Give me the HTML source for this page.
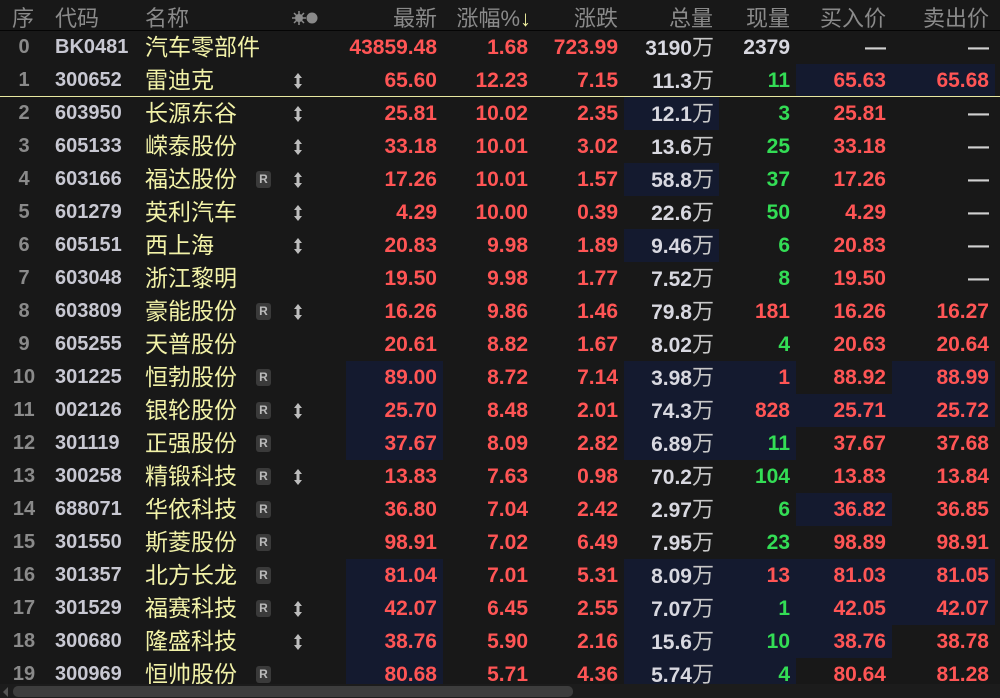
<!DOCTYPE html>
<html><head><meta charset="utf-8">
<style>
*{margin:0;padding:0;box-sizing:border-box}
body{width:1000px;height:698px;background:#181818;overflow:hidden;position:relative;font-family:"Liberation Sans","Noto Sans CJK SC",sans-serif}
.hd{position:absolute;left:0;top:0;width:1000px;height:31px;border-bottom:1px solid #050505;color:#8a8a8a;font-size:22px}
.hd span{position:absolute;top:1px;white-space:nowrap}
.r{position:absolute;left:0;width:1000px;height:33px}
.r>span{position:absolute;top:0;height:33px;line-height:33px;white-space:nowrap}
.s{left:0;width:48px;text-align:center;color:#8a8a8a;font-size:20px;font-weight:bold}
.c{left:55px;color:#c8c8d2;font-size:20px;font-weight:bold}
.n{left:145px;color:#f2f2a8;font-size:23px}
.R{left:256px;top:8px!important;width:15px;height:17px!important;line-height:17px!important;background:#3a3a3a;border-radius:3px;color:#bbb;font-size:12px;font-weight:bold;text-align:center}
.a{left:293px;top:9px!important;height:16px!important;line-height:0!important}
.p{left:346px;width:97px;text-align:right;padding-right:6px;color:#ff5555;font-size:21px;font-weight:bold}
.z{left:443px;width:91px;text-align:right;padding-right:6px;color:#ff5555;font-size:21px;font-weight:bold}
.d{left:534px;width:90px;text-align:right;padding-right:6px;color:#ff5555;font-size:21px;font-weight:bold}
.v{left:624px;width:95px;text-align:right;padding-right:5px;color:#d8d8e0;font-size:21px;font-weight:bold}
.v i{font-style:normal;font-weight:normal;font-size:22px;color:#c8c8c8}
.q{left:719px;width:77px;text-align:right;padding-right:6px;color:#33dd55;font-size:21px;font-weight:bold}
.q.red{color:#ff5555}
.b{left:796px;width:96px;text-align:right;padding-right:6px;color:#ff5555;font-size:21px;font-weight:bold}
.k{left:892px;width:103px;text-align:right;padding-right:6px;color:#ff5555;font-size:21px;font-weight:bold}
.h{background:#141a2f}
.dash{color:#d0d0d0!important}
.sb{position:absolute;left:0;top:684px;width:1000px;height:14px;background:#1c1c1c}
.th{position:absolute;left:13px;top:686px;width:560px;height:11px;background:#3d3d3d;border-radius:5px}
</style></head><body>
<svg width="0" height="0" style="position:absolute"><defs><symbol id="ar" viewBox="0 0 10 16"><path d="M5 0L9 5H6.5V11H9L5 16L1 11H3.5V5H1Z" fill="#bdbdbd"/></symbol></defs></svg>
<div class="hd">
<span style="left:12px">序</span><span style="left:55px">代码</span><span style="left:145px">名称</span>
<span style="left:292px;top:6px"><svg width="32" height="16"><g fill="#8a8a8a"><circle cx="7" cy="8" r="4"/><path d="M7 1v14M0 8h14M2 3l10 10M12 3L2 13" stroke="#8a8a8a" stroke-width="1.5"/><circle cx="20" cy="8" r="5.5"/></g></svg></span>
<span style="right:563px">最新</span>
<span style="right:469px">涨幅%<b style="color:#f0f0a0;font-weight:normal">↓</b></span>
<span style="right:382px">涨跌</span>
<span style="right:287px">总量</span>
<span style="right:210px">现量</span>
<span style="right:114px">买入价</span>
<span style="right:11px">卖出价</span>
</div>
<div style="position:absolute;left:0;top:96px;width:1000px;height:1px;background:#e8e8a0;z-index:2"></div>

<div class="r" style="top:31px"><span class="s">0</span><span class="c">BK0481</span><span class="n">汽车零部件</span><span class="p">43859.48</span><span class="z">1.68</span><span class="d">723.99</span><span class="v">3190<i>万</i></span><span class="q" style="color:#d8d8e0">2379</span><span class="b dash">—</span><span class="k dash">—</span></div>
<div class="r" style="top:64px"><span class="s">1</span><span class="c">300652</span><span class="n">雷迪克</span><span class="a"><svg width="10" height="16"><use href="#ar"/></svg></span><span class="p">65.60</span><span class="z">12.23</span><span class="d">7.15</span><span class="v">11.3<i>万</i></span><span class="q">11</span><span class="b h">65.63</span><span class="k h">65.68</span></div>
<div class="r" style="top:97px"><span class="s">2</span><span class="c">603950</span><span class="n">长源东谷</span><span class="a"><svg width="10" height="16"><use href="#ar"/></svg></span><span class="p">25.81</span><span class="z">10.02</span><span class="d">2.35</span><span class="v h">12.1<i>万</i></span><span class="q">3</span><span class="b">25.81</span><span class="k dash">—</span></div>
<div class="r" style="top:130px"><span class="s">3</span><span class="c">605133</span><span class="n">嵘泰股份</span><span class="a"><svg width="10" height="16"><use href="#ar"/></svg></span><span class="p">33.18</span><span class="z">10.01</span><span class="d">3.02</span><span class="v">13.6<i>万</i></span><span class="q">25</span><span class="b">33.18</span><span class="k dash">—</span></div>
<div class="r" style="top:163px"><span class="s">4</span><span class="c">603166</span><span class="n">福达股份</span><span class="R">R</span><span class="a"><svg width="10" height="16"><use href="#ar"/></svg></span><span class="p">17.26</span><span class="z">10.01</span><span class="d">1.57</span><span class="v h">58.8<i>万</i></span><span class="q">37</span><span class="b">17.26</span><span class="k dash">—</span></div>
<div class="r" style="top:196px"><span class="s">5</span><span class="c">601279</span><span class="n">英利汽车</span><span class="a"><svg width="10" height="16"><use href="#ar"/></svg></span><span class="p">4.29</span><span class="z">10.00</span><span class="d">0.39</span><span class="v">22.6<i>万</i></span><span class="q">50</span><span class="b">4.29</span><span class="k dash">—</span></div>
<div class="r" style="top:229px"><span class="s">6</span><span class="c">605151</span><span class="n">西上海</span><span class="a"><svg width="10" height="16"><use href="#ar"/></svg></span><span class="p">20.83</span><span class="z">9.98</span><span class="d">1.89</span><span class="v h">9.46<i>万</i></span><span class="q">6</span><span class="b">20.83</span><span class="k dash">—</span></div>
<div class="r" style="top:262px"><span class="s">7</span><span class="c">603048</span><span class="n">浙江黎明</span><span class="p">19.50</span><span class="z">9.98</span><span class="d">1.77</span><span class="v">7.52<i>万</i></span><span class="q">8</span><span class="b">19.50</span><span class="k dash">—</span></div>
<div class="r" style="top:295px"><span class="s">8</span><span class="c">603809</span><span class="n">豪能股份</span><span class="R">R</span><span class="a"><svg width="10" height="16"><use href="#ar"/></svg></span><span class="p">16.26</span><span class="z">9.86</span><span class="d">1.46</span><span class="v">79.8<i>万</i></span><span class="q red">181</span><span class="b">16.26</span><span class="k">16.27</span></div>
<div class="r" style="top:328px"><span class="s">9</span><span class="c">605255</span><span class="n">天普股份</span><span class="p">20.61</span><span class="z">8.82</span><span class="d">1.67</span><span class="v">8.02<i>万</i></span><span class="q">4</span><span class="b">20.63</span><span class="k">20.64</span></div>
<div class="r" style="top:361px"><span class="s">10</span><span class="c">301225</span><span class="n">恒勃股份</span><span class="R">R</span><span class="p h">89.00</span><span class="z">8.72</span><span class="d">7.14</span><span class="v h">3.98<i>万</i></span><span class="q red h">1</span><span class="b">88.92</span><span class="k h">88.99</span></div>
<div class="r" style="top:394px"><span class="s">11</span><span class="c">002126</span><span class="n">银轮股份</span><span class="R">R</span><span class="a"><svg width="10" height="16"><use href="#ar"/></svg></span><span class="p h">25.70</span><span class="z">8.48</span><span class="d">2.01</span><span class="v h">74.3<i>万</i></span><span class="q red h">828</span><span class="b h">25.71</span><span class="k h">25.72</span></div>
<div class="r" style="top:427px"><span class="s">12</span><span class="c">301119</span><span class="n">正强股份</span><span class="R">R</span><span class="p h">37.67</span><span class="z">8.09</span><span class="d">2.82</span><span class="v h">6.89<i>万</i></span><span class="q h">11</span><span class="b">37.67</span><span class="k">37.68</span></div>
<div class="r" style="top:460px"><span class="s">13</span><span class="c">300258</span><span class="n">精锻科技</span><span class="R">R</span><span class="a"><svg width="10" height="16"><use href="#ar"/></svg></span><span class="p">13.83</span><span class="z">7.63</span><span class="d">0.98</span><span class="v">70.2<i>万</i></span><span class="q">104</span><span class="b">13.83</span><span class="k">13.84</span></div>
<div class="r" style="top:493px"><span class="s">14</span><span class="c">688071</span><span class="n">华依科技</span><span class="R">R</span><span class="p">36.80</span><span class="z">7.04</span><span class="d">2.42</span><span class="v">2.97<i>万</i></span><span class="q">6</span><span class="b h">36.82</span><span class="k">36.85</span></div>
<div class="r" style="top:526px"><span class="s">15</span><span class="c">301550</span><span class="n">斯菱股份</span><span class="R">R</span><span class="p">98.91</span><span class="z">7.02</span><span class="d">6.49</span><span class="v">7.95<i>万</i></span><span class="q">23</span><span class="b">98.89</span><span class="k">98.91</span></div>
<div class="r" style="top:559px"><span class="s">16</span><span class="c">301357</span><span class="n">北方长龙</span><span class="R">R</span><span class="p h">81.04</span><span class="z">7.01</span><span class="d">5.31</span><span class="v h">8.09<i>万</i></span><span class="q red h">13</span><span class="b h">81.03</span><span class="k h">81.05</span></div>
<div class="r" style="top:592px"><span class="s">17</span><span class="c">301529</span><span class="n">福赛科技</span><span class="R">R</span><span class="a"><svg width="10" height="16"><use href="#ar"/></svg></span><span class="p h">42.07</span><span class="z">6.45</span><span class="d">2.55</span><span class="v h">7.07<i>万</i></span><span class="q h">1</span><span class="b h">42.05</span><span class="k h">42.07</span></div>
<div class="r" style="top:625px"><span class="s">18</span><span class="c">300680</span><span class="n">隆盛科技</span><span class="a"><svg width="10" height="16"><use href="#ar"/></svg></span><span class="p h">38.76</span><span class="z">5.90</span><span class="d">2.16</span><span class="v h">15.6<i>万</i></span><span class="q h">10</span><span class="b h">38.76</span><span class="k">38.78</span></div>
<div class="r" style="top:658px"><span class="s">19</span><span class="c">300969</span><span class="n">恒帅股份</span><span class="R">R</span><span class="p h">80.68</span><span class="z">5.71</span><span class="d">4.36</span><span class="v h">5.74<i>万</i></span><span class="q h">4</span><span class="b">80.64</span><span class="k">81.28</span></div>

<div class="sb"></div>
<div style="position:absolute;left:3px;top:687px;width:0;height:0;border-top:5px solid transparent;border-bottom:5px solid transparent;border-right:5px solid #555"></div>
<div class="th"></div>
</body></html>
